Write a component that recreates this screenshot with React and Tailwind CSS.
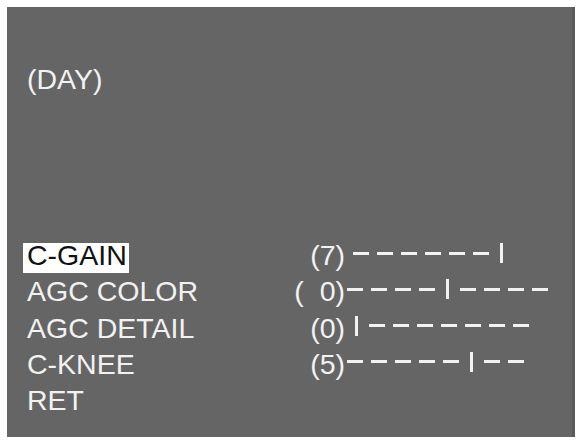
import React from 'react';

// camera OSD submenu: colour settings for day mode
const rows = [
  { label: 'C-GAIN', value: '(7)', offset: 'ml-[8px]', bar: '------|', active: true },
  { label: 'AGC COLOR', value: '(  0)', offset: 'ml-[2px]', bar: '----|----' },
  { label: 'AGC DETAIL', value: '(0)', offset: 'ml-[7px]', bar: '|-------' },
  { label: 'C-KNEE', value: '(5)', offset: 'ml-[2px]', bar: '-----|--' },
  { label: 'RET' },
];

const Bar = ({ pattern, offset }) => (
  <div className={`flex items-center gap-2 h-[20px] mt-[5px] ${offset}`}>
    {pattern.split('').map((c, i) =>
      c === '|' ? (
        <span key={i} className="w-[3px] h-[20px] mx-[3px] bg-[#f2f2f2]" />
      ) : (
        <span key={i} className="w-4 h-[3px] bg-[#f2f2f2]" />
      )
    )}
  </div>
);

const App = () => {
  return (
    <div className="w-[579px] h-[440px] bg-white pl-[7px] pt-[7px]">
      <div
        className="w-[568px] h-[430px] bg-[#666565] border-r-[3px] border-[#5a5a5a] pl-4 pt-[59px] text-[28.5px] leading-[24px] text-[#f2f2f2]"
        style={{ fontFamily: '"Liberation Sans", Arial, sans-serif' }}
      >
        <div className="h-[30px] leading-[26px] px-1">(DAY)</div>

        <div className="flex flex-col mt-[142px]">
          {rows.map((row) => (
            <div key={row.label} className="flex items-start h-[36.25px]">
              <div className="flex w-[250px] mt-[5px]">
                <span
                  className={`h-[30px] leading-[24px] pl-1 pr-0.5 ${
                    row.active ? 'bg-white text-[#111]' : ''
                  }`}
                >
                  {row.label}
                </span>
              </div>
              {row.value && (
                <>
                  <div className="w-[72px] mt-[5px] h-[30px] leading-[24px] text-right whitespace-pre">
                    {row.value}
                  </div>
                  <Bar pattern={row.bar} offset={row.offset} />
                </>
              )}
            </div>
          ))}
        </div>
      </div>
    </div>
  );
};

export default App;
